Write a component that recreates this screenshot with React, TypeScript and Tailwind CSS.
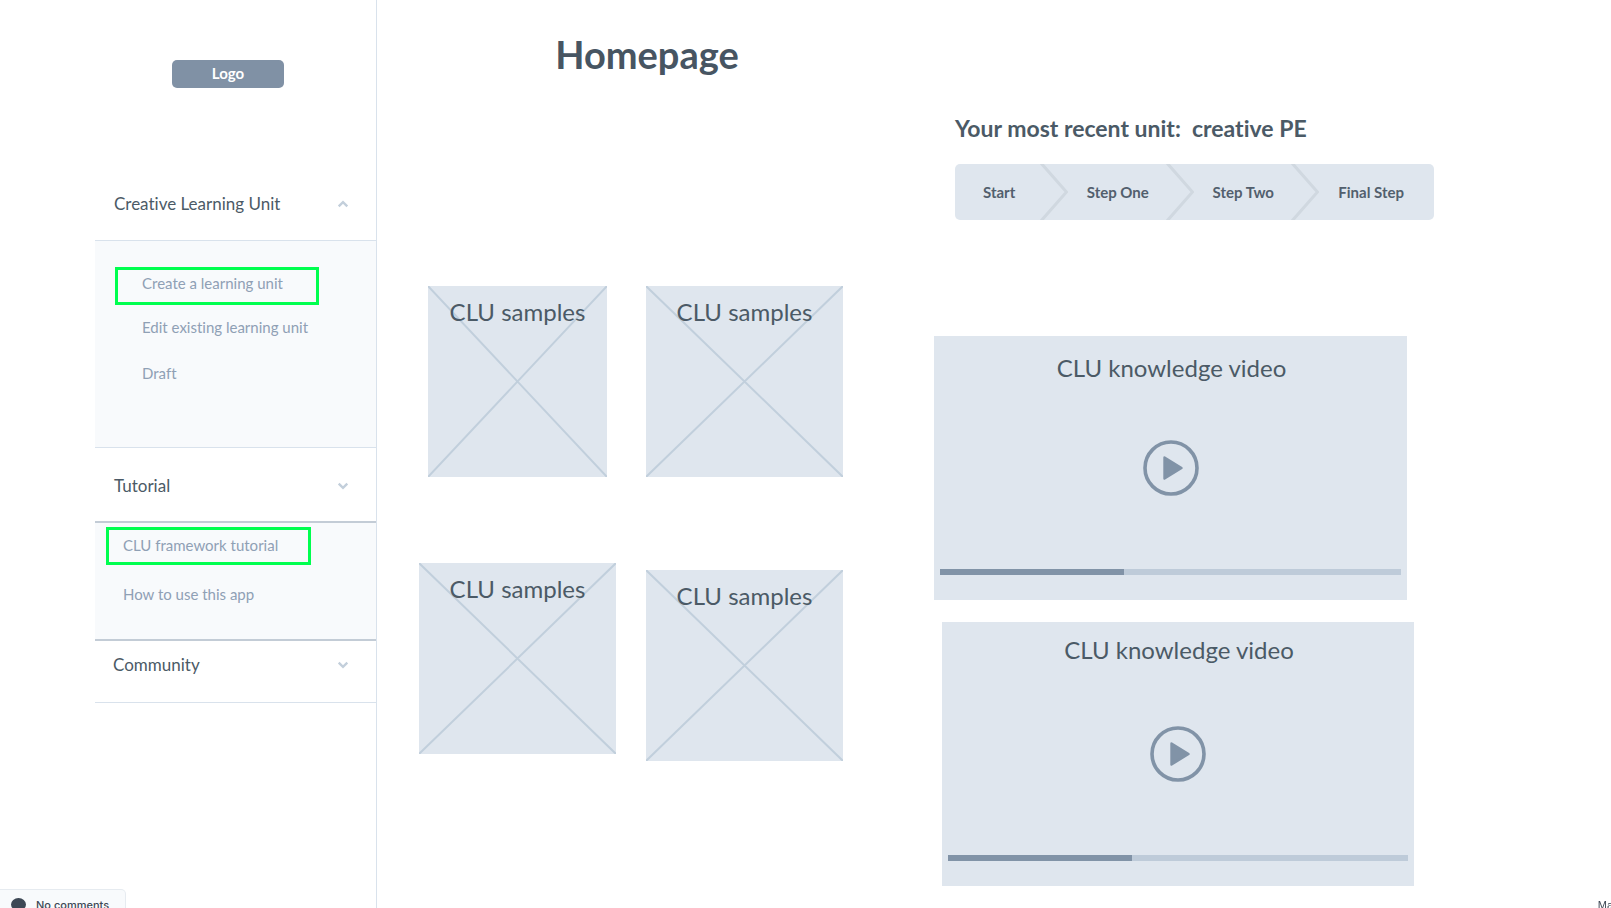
import { useState } from "react";

type MenuItem = { label: string; highlighted?: boolean };

function Chevron({ up }: { up?: boolean }) {
  return (
    <svg width="12" height="8" viewBox="0 0 12 8" fill="none" stroke="#c3cfdb" strokeWidth="2.4" aria-hidden="true">
      <path d={up ? "M1.7 6.3 6 2.2l4.3 4.1" : "M1.7 1.7 6 5.8l4.3-4.1"} />
    </svg>
  );
}

function SectionButton({ label, open, className }: { label: string; open?: boolean; className: string }) {
  return (
    <button
      type="button"
      aria-expanded={open}
      className={`flex w-full items-center justify-between pr-[27px] text-left text-[17px] leading-6 text-[#4b5a66] ${className}`}
    >
      <span>{label}</span>
      <Chevron up={open} />
    </button>
  );
}

function MenuLink({ item, className }: { item: MenuItem; className: string }) {
  return (
    <a
      href="#"
      className={`flex items-center text-[15px] leading-6 text-[#8fa0b5] ${className} ${
        item.highlighted ? "border-3 border-[#00ff4f]" : "border-3 border-transparent"
      }`}
    >
      {item.label}
    </a>
  );
}

function Sidebar() {
  return (
    <nav className="w-[377px] shrink-0 border-r border-[#d9e2ec] pl-[95px]" aria-label="Main">
      <div className="flex justify-center pt-[60px] pr-[26px] pl-[11px]">
        <a href="#" className="flex h-7 w-28 items-center justify-center rounded-[5px] bg-[#8091a5] pb-px text-[15px] font-bold text-white">
          Logo
        </a>
      </div>
      <SectionButton label="Creative Learning Unit" open className="mt-20 h-18 pl-[19px]" />
      <div className="flex h-52 flex-col items-start border-y border-[#d9e2ec] bg-[#f8fafc] pt-[26px] pl-5">
        <MenuLink item={{ label: "Create a learning unit", highlighted: true }} className="mb-1 h-[38px] w-51 pb-[6px] pl-6" />
        <MenuLink item={{ label: "Edit existing learning unit" }} className="h-[38px] pb-[2px] pl-6" />
        <MenuLink item={{ label: "Draft" }} className="mt-2 h-[38px] pb-[2px] pl-6" />
      </div>
      <SectionButton label="Tutorial" className="h-[73px] pt-[2px] pl-[19px]" />
      <div className="flex h-[120px] flex-col items-start border-y-2 border-[#c3ccd6] bg-[#f8fafc] pt-1 pl-[11px]">
        <MenuLink item={{ label: "CLU framework tutorial", highlighted: true }} className="h-[38px] w-[205px] pb-[2px] pl-[14px]" />
        <MenuLink item={{ label: "How to use this app" }} className="mt-[11px] h-[38px] pb-[2px] pl-[14px]" />
      </div>
      <SectionButton label="Community" className="h-[62px] border-b border-[#d9e2ec] pb-[14px] pl-[18px]" />
    </nav>
  );
}

function SampleCard({ className = "" }: { className?: string }) {
  return (
    <article className={`relative h-[191px] bg-[#dfe6ee] pt-[10px] text-center ${className}`}>
      <svg className="absolute inset-0 h-full w-full" viewBox="0 0 100 100" preserveAspectRatio="none" aria-hidden="true">
        <path d="M0 0 100 100M100 0 0 100" stroke="#c1cfdc" strokeWidth="2" vectorEffect="non-scaling-stroke" />
      </svg>
      <h2 className="relative text-2xl leading-8 text-[#4b5a66]">CLU samples</h2>
    </article>
  );
}

function VideoCard({ className, titleClass }: { className: string; titleClass: string }) {
  const [progress] = useState(40);
  return (
    <article className={`flex h-66 flex-col items-center bg-[#dfe6ee] px-[6px] ${className}`}>
      <h2 className={`text-2xl leading-8 text-[#4b5a66] ${titleClass}`}>CLU knowledge video</h2>
      <button type="button" aria-label="Play video" className="mt-auto">
        <svg width="56" height="56" viewBox="0 0 56 56" fill="none" aria-hidden="true">
          <circle cx="28" cy="28" r="26" stroke="#8193a7" strokeWidth="3.6" />
          <path d="M21.5 17.5 38.5 28 21.5 38.5Z" fill="#8193a7" stroke="#8193a7" strokeWidth="2.4" strokeLinejoin="round" />
        </svg>
      </button>
      <div
        role="progressbar"
        aria-label="Playback"
        aria-valuenow={progress}
        className="mt-[73px] mb-[25px] h-[6px] w-full bg-[#becbd9]"
      >
        <div className="h-full bg-[#8193a7]" style={{ width: `${progress}%` }} />
      </div>
    </article>
  );
}

function StepDivider() {
  return (
    <svg className="h-14 w-7 shrink-0" viewBox="0 0 28 56" fill="none" aria-hidden="true">
      <path d="M1 -1 26.5 28 1 57" stroke="#d0d8e0" strokeWidth="3" />
    </svg>
  );
}

function Steps() {
  return (
    <ol className="flex h-14 items-center overflow-hidden rounded-[5px] bg-[#dfe6ee] pr-[30px] pl-7 text-[15px] font-bold text-[#525f6d]">
      <li className="grow basis-[54px]">Start</li>
      <StepDivider />
      <li className="grow basis-[95px] pl-[19px]">Step One</li>
      <StepDivider />
      <li className="grow basis-[95px] pl-[19px]">Step Two</li>
      <StepDivider />
      <li className="pl-[19px]">Final Step</li>
    </ol>
  );
}

export default function App() {
  return (
    <div className="flex h-screen min-h-[908px] overflow-hidden bg-white font-['Lato',sans-serif] [font-variant-ligatures:none]">
      <Sidebar />
      <main className="grid flex-1 grid-cols-[minmax(0,424fr)_minmax(0,500fr)] gap-x-[91px] pr-[177px] pl-[42px]">
        <section>
          <h1 className="pt-[30px] pl-8 text-center text-[38px] leading-12 font-bold text-[#475562]">Homepage</h1>
          <div className="mt-52 grid grid-cols-2 gap-x-[30px] gap-y-[86px]">
            <SampleCard className="mx-[9px]" />
            <SampleCard />
            <SampleCard />
            <SampleCard className="mt-[7px]" />
          </div>
        </section>
        <section className="pt-28">
          <div className="pl-[21px]">
            <h2 className="text-[23px] leading-8 font-bold whitespace-pre text-[#4b5a66]">Your most recent unit:  creative PE</h2>
            <div className="mt-5">
              <Steps />
            </div>
          </div>
          <VideoCard className="mt-29 mr-[27px]" titleClass="pt-4 pl-[2px]" />
          <VideoCard className="mt-[22px] mr-5 ml-2" titleClass="pt-3 pl-[2px]" />
        </section>
      </main>
      <footer className="font-['Inter',sans-serif]">
        <button
          type="button"
          className="fixed -bottom-2 left-0 flex h-[27px] items-center gap-[10px] rounded-tr-[5px] border border-l-0 border-[#e6ebf0] bg-[#f8fafc] pt-[5px] pr-4 pl-[11px] text-[11px] font-medium text-[#3d4855]"
        >
          <svg width="15" height="14" viewBox="0 0 15 14" aria-hidden="true">
            <ellipse cx="7.5" cy="6.5" rx="7.5" ry="6.5" fill="#3d4855" />
          </svg>
          No comments
        </button>
        <p className="fixed -right-[2px] -bottom-[5px] font-['Liberation_Sans',sans-serif] text-[11px] leading-4 text-[#3d4855]">Ma</p>
      </footer>
    </div>
  );
}
